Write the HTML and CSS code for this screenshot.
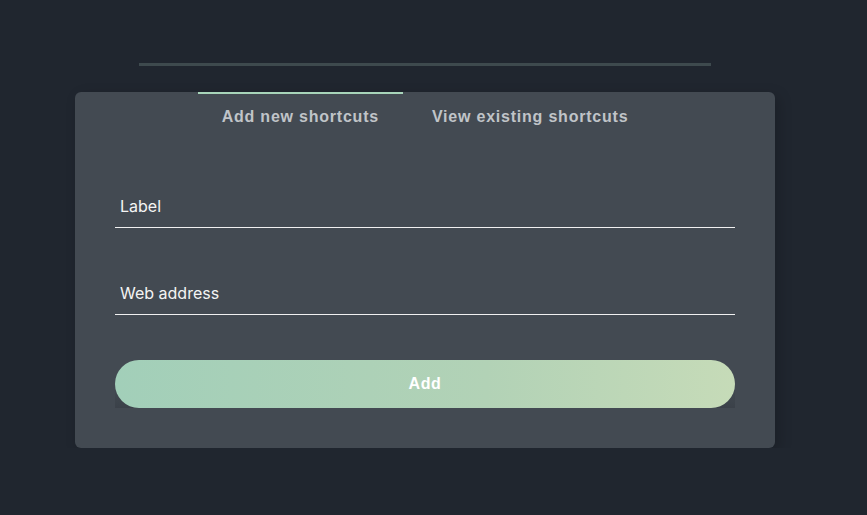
FILE: index.html
```html
<!DOCTYPE html>
<html>

<head>
    <title>Shortcuts</title>
    <link rel="stylesheet" href="styles.css">
</head>

<body>
    <div class="page">
        <div class="divider"></div>
        <div class="card">
            <div class="tabs">
                <button class="tab active">Add new shortcuts</button>
                <button class="tab">View existing shortcuts</button>
            </div>
            <form class="form">
                <label class="field">
                    <span class="field-label">Label</span>
                </label>
                <label class="field">
                    <span class="field-label">Web address</span>
                </label>
                <div class="button-wrap">
                    <button type="button" class="add-button">Add</button>
                </div>
            </form>
        </div>
    </div>
</body>

</html>
```

FILE: styles.css
```css
body {
    margin: 0;
    background-color: #20262f;
    font-family: Inter, "Liberation Sans", sans-serif;
}

.page {
    width: 850px;
    display: flex;
    flex-direction: column;
    align-items: center;
}

.divider {
    width: 572px;
    height: 3px;
    margin-top: 63px;
    background-color: #3e4a4e;
}

.card {
    width: 700px;
    margin-top: 26px;
    padding: 0 40px 40px;
    box-sizing: border-box;
    background-color: #434a52;
    border-radius: 6px;
    box-shadow: 4px 4px 14px rgba(0, 0, 0, 0.18);
}

.tabs {
    display: flex;
    justify-content: center;
    gap: 5px;
}

.tab {
    background: none;
    border: none;
    border-top: 2px solid transparent;
    padding: 13px 24px 0;
    height: 34px;
    font-family: "Liberation Sans", Arial, sans-serif;
    font-size: 16px;
    font-weight: bold;
    letter-spacing: 0.78px;
    color: #c0c4c8;
    cursor: pointer;
}

.tab.active {
    border-top-color: #a8d5ba;
}

.form {
    display: flex;
    flex-direction: column;
    padding-top: 59px;
}

.field {
    display: flex;
    align-items: center;
    height: 42px;
    padding-left: 5px;
    border-bottom: 1px solid #f0f0f0;
    margin-bottom: 44px;
}

.field-label {
    font-size: 16px;
    color: #f4f4f4;
}

.button-wrap {
    margin-top: 1px;
    background: linear-gradient(to bottom, transparent 55%, rgba(20, 24, 30, 0.18));
}

.add-button {
    display: block;
    width: 100%;
    height: 48px;
    border: none;
    border-radius: 24px;
    background: linear-gradient(90deg, #a2cfb9 0%, #b2d2b6 60%, #c6dbb8 100%);
    color: #fff;
    font-family: "Liberation Sans", Arial, sans-serif;
    font-size: 16px;
    font-weight: bold;
    letter-spacing: 0.6px;
    cursor: pointer;
}
```
